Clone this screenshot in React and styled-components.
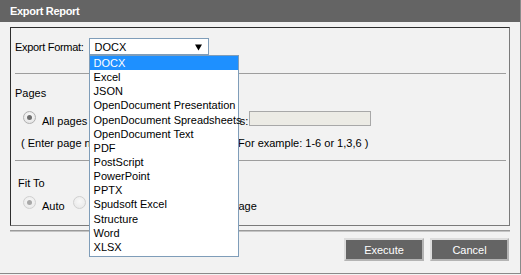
import React from "react";
import styled, { createGlobalStyle } from "styled-components";

const Global = createGlobalStyle`
  html, body { margin: 0; padding: 0; background: #f2f2f2; }
  body { font-family: "Liberation Sans", Arial, sans-serif; font-size: 11px; color: #000; }
`;

const Dialog = styled.div`
  width: 520px;
  height: 273px;
  border-right: 1px solid #8a8a8a;
  border-bottom: 1px solid #8a8a8a;
  background: #f2f2f2;
  display: flex;
  flex-direction: column;
`;

const TitleBar = styled.div`
  height: 22px;
  background: #646464;
  color: #fff;
  display: flex;
  align-items: center;
  padding-left: 10px;
  font-size: 11px;
  font-weight: bold;
  letter-spacing: -0.3px;
`;

const FieldBox = styled.div`
  margin: 5px 0 0 10px;
  width: 498px;
  height: 197px;
  border-top: 1px solid #2e2e2e;
  border-left: 1px solid #2e2e2e;
  border-right: 1px solid #7a7a7a;
  border-bottom: 1px solid #7a7a7a;
  display: flex;
  flex-direction: column;
`;

const FormatRow = styled.div`
  display: flex;
  align-items: center;
  padding: 10px 0 0 4px;
  height: 17px;
`;

const Label = styled.span`
  white-space: nowrap;
  letter-spacing: -0.3px;
`;

const SelectWrap = styled.div`
  position: relative;
  margin-left: 5px;
`;

const SelectBox = styled.div`
  height: 15px;
  width: 113px;
  border: 1px solid #7f9db9;
  background: #fff;
  display: flex;
  align-items: center;
  padding-left: 5px;
  position: relative;
`;

const Arrow = styled.svg`
  position: absolute;
  right: 6px;
  top: 5px;
`;

const List = styled.ul`
  position: absolute;
  left: 0;
  top: 17px;
  width: 148px;
  margin: 0;
  padding: 0 0 2px 0;
  list-style: none;
  background: #fff;
  border: 1px solid #7f9db9;
  z-index: 5;
`;

const Item = styled.li`
  height: 14.15px;
  line-height: 14.15px;
  padding-left: 4px;
  white-space: nowrap;
  background: ${(p) => (p.$active ? "#1e90ff" : "transparent")};
  color: ${(p) => (p.$active ? "#fff" : "#000")};
`;

const Separator = styled.div`
  height: 1px;
  background: #9e9e9e;
  margin: ${(p) => p.$top}px 3px 0 4px;
`;

const SectionLabel = styled.div`
  line-height: 14px;
  margin: ${(p) => p.$top}px 0 0 ${(p) => p.$left}px;
`;

const RadioRow = styled.div`
  display: flex;
  align-items: center;
  height: 16px;
  margin-top: ${(p) => p.$top}px;
  padding-left: 12px;
`;

const Option = styled.label`
  display: flex;
  align-items: center;
  width: ${(p) => (p.$width ? `${p.$width}px` : "auto")};
  flex: none;
  white-space: nowrap;
`;

const Radio = styled.span`
  width: 11px;
  height: 11px;
  border-radius: 50%;
  border: 1px solid ${(p) => (p.$disabled ? "#d0d0d0" : "#b0b0b0")};
  background: ${(p) =>
    p.$disabled
      ? "radial-gradient(circle at 50% 40%, #f8f8f8, #e6e6e6)"
      : "radial-gradient(circle at 50% 40%, #fdfdfd, #dedede)"};
  margin-right: 6px;
  margin-top: -3px;
  display: flex;
  align-items: center;
  justify-content: center;
  flex: none;
  &::after {
    content: "";
    display: ${(p) => (p.$checked ? "block" : "none")};
    width: 5px;
    height: 5px;
    border-radius: 50%;
    background: ${(p) => (p.$disabled ? "#a8a8a8" : "#6e6e6e")};
  }
`;

const OptText = styled.span`
  margin-top: 3px;
`;

const PageInput = styled.div`
  width: 120px;
  height: 13px;
  margin-left: 1px;
  margin-top: -1px;
  border: 1px solid #a8a8a8;
  background: #ecebe5;
`;

const Hint = styled.div`
  line-height: 14px;
  margin: 9px 0 0 10px;
  white-space: nowrap;
`;

const Footer = styled.div`
  display: flex;
  flex-direction: column;
`;

const FooterLine = styled.div`
  margin: 4px 0 0 10px;
  width: 500px;
  height: 1px;
  border-top: 1px solid #9a9a9a;
  background: #c4c4c4;
`;

const ButtonBar = styled.div`
  display: flex;
  justify-content: flex-end;
  gap: 6px;
  padding: 6px 11px 0 0;
`;

const Button = styled.button`
  width: ${(p) => p.$width}px;
  height: 23px;
  background: #646464;
  color: #fff;
  font-family: "Liberation Sans", Arial, sans-serif;
  font-size: 11px;
  border: 2px solid;
  border-color: #dcdcdc #b4b4b4 #b4b4b4 #dcdcdc;
  padding: 0;
  display: flex;
  align-items: center;
  justify-content: center;
`;

const formats = [
  "DOCX",
  "Excel",
  "JSON",
  "OpenDocument Presentation",
  "OpenDocument Spreadsheets",
  "OpenDocument Text",
  "PDF",
  "PostScript",
  "PowerPoint",
  "PPTX",
  "Spudsoft Excel",
  "Structure",
  "Word",
  "XLSX",
];

export default function App() {
  return (
    <>
      <Global />
      <Dialog>
        <TitleBar>Export Report</TitleBar>
        <FieldBox>
          <FormatRow>
            <Label>Export Format:</Label>
            <SelectWrap>
              <SelectBox>
                DOCX
                <Arrow width="7" height="7" viewBox="0 0 7 7">
                  <path d="M0 0.5 H7 L3.5 6.5 Z" fill="#000" />
                </Arrow>
              </SelectBox>
              <List>
                {formats.map((f, i) => (
                  <Item key={f} $active={i === 0}>
                    {f}
                  </Item>
                ))}
              </List>
            </SelectWrap>
          </FormatRow>
          <Separator $top={18} />
          <SectionLabel $top={12} $left={4}>
            Pages
          </SectionLabel>
          <RadioRow $top={11}>
            <Option $width={77}>
              <Radio $checked />
              <OptText>All pages</OptText>
            </Option>
            <Option $width={95}>
              <Radio />
              <OptText>Current page</OptText>
            </Option>
            <Option>
              <Radio />
              <OptText>Pages:</OptText>
              <PageInput />
            </Option>
          </RadioRow>
          <Hint>{"( Enter page numbers and/or page ranges.\u00a0\u00a0 For example: 1-6 or 1,3,6 )"}</Hint>
          <Separator $top={10} />
          <SectionLabel $top={15} $left={7}>
            Fit To
          </SectionLabel>
          <RadioRow $top={6}>
            <Option $width={50}>
              <Radio $checked $disabled />
              <OptText>Auto</OptText>
            </Option>
            <Option $width={81}>
              <Radio $disabled />
              <OptText>Actual size</OptText>
            </Option>
            <Option>
              <Radio $disabled />
              <OptText>Fit to whole page</OptText>
            </Option>
          </RadioRow>
        </FieldBox>
        <Footer>
          <FooterLine />
          <ButtonBar>
            <Button $width={80}>Execute</Button>
            <Button $width={79}>Cancel</Button>
          </ButtonBar>
        </Footer>
      </Dialog>
    </>
  );
}
